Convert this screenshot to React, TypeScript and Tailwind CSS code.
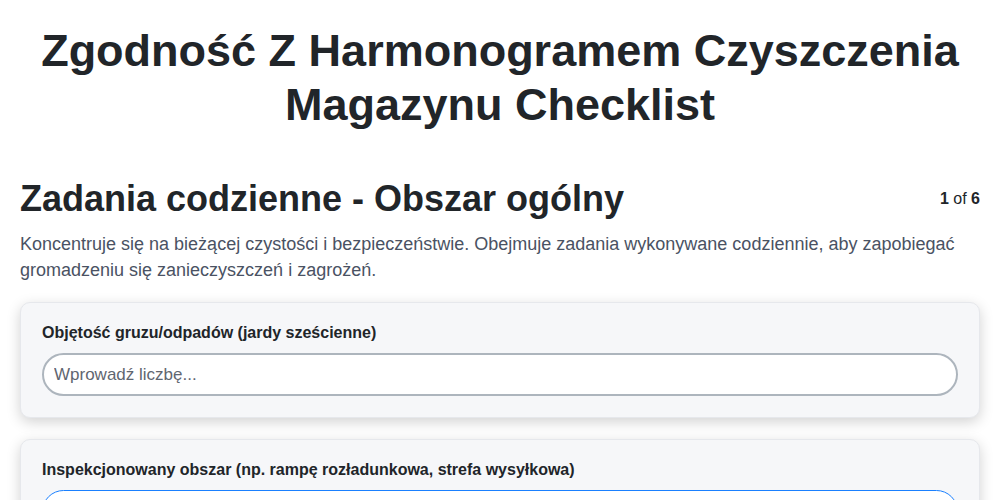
import React from "react";

export default function App() {
  return (
    <div className="min-h-screen bg-white px-5 pt-6 text-[#212529]" style={{ fontFamily: '"Liberation Sans", Arial, sans-serif' }}>
      <h1 className="text-center text-[45px] font-bold leading-[54px] text-[#212529]">
        Zgodność Z Harmonogramem Czyszczenia Magazynu Checklist
      </h1>
      <div className="mt-[45px] flex items-center justify-between">
        <h2 className="text-[36px] font-bold leading-[44px] text-[#212529]">Zadania codzienne - Obszar ogólny</h2>
        <div className="text-[16px] text-[#212529]">
          <span className="font-bold">1</span> of <span className="font-bold">6</span>
        </div>
      </div>
      <p className="mt-[10px] text-[18px] leading-[26px] text-[#4a5263]">
        Koncentruje się na bieżącej czystości i bezpieczeństwie. Obejmuje zadania wykonywane codziennie, aby zapobiegać gromadzeniu się zanieczyszczeń i zagrożeń.
      </p>
      <div className="mt-[19px] flex flex-col gap-[21px]">
        <div className="rounded-[10px] border border-[#e6e8ec] bg-[#f6f7f9] px-[21px] pb-[21px] pt-[20px] shadow-[0_4px_14px_rgba(0,0,0,0.18)]">
          <label className="mb-[10px] block text-[16px] font-bold leading-[20px] text-[#212529]">
            Objętość gruzu/odpadów (jardy sześcienne)
          </label>
          <input
            type="number"
            placeholder="Wprowadź liczbę..."
            className="block h-[43px] w-full rounded-full border-2 border-[#adb5bd] bg-white px-[10px] text-[17px] text-[#212529] outline-none placeholder:text-[#5f6670]"
          />
        </div>
        <div className="rounded-[10px] border border-[#e6e8ec] bg-[#f6f7f9] px-[21px] pb-[21px] pt-[20px] shadow-[0_4px_14px_rgba(0,0,0,0.18)]">
          <label className="mb-[10px] block text-[16px] font-bold leading-[20px] text-[#212529]">
            Inspekcjonowany obszar (np. rampę rozładunkowa, strefa wysyłkowa)
          </label>
          <input
            type="text"
            className="block h-[43px] w-full rounded-full border border-[#1a80ff] bg-white px-[11px] text-[17px] text-[#212529] outline-none"
          />
        </div>
      </div>
    </div>
  );
}
